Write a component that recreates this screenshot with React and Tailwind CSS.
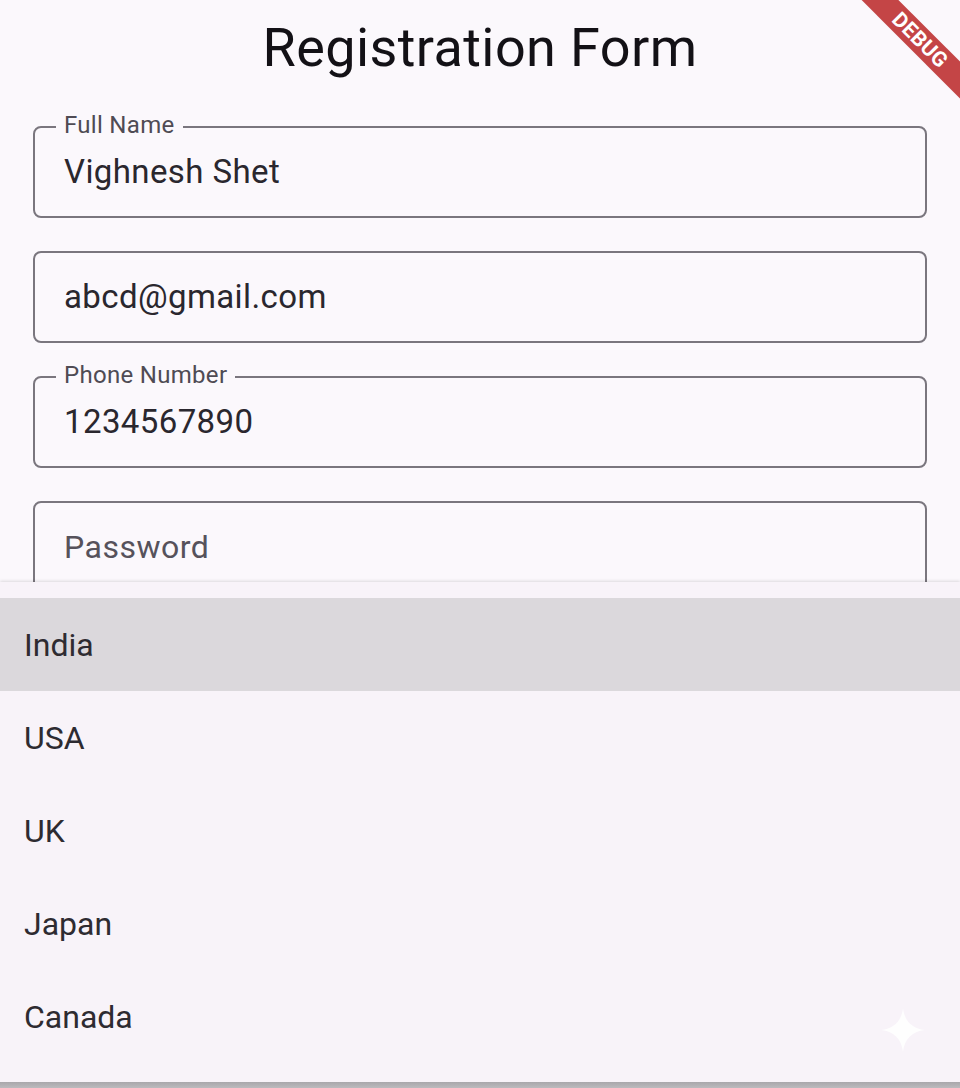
import React from "react";

const fields = [
  { label: "Full Name", value: "Vighnesh Shet", showLabel: true },
  { label: "Email", value: "abcd@gmail.com", showLabel: false },
  { label: "Phone Number", value: "1234567890", showLabel: true },
  { label: "Password", value: "", placeholder: "Password", showLabel: false },
];

const countries = ["India", "USA", "UK", "Japan", "Canada"];

function Field({ f }) {
  return (
    <div className="relative h-[92px] rounded-[8px] border-2 border-[#7a767e] flex items-center pl-[29px]">
      {f.showLabel && (
        <span className="absolute -top-[17px] left-[21px] px-[8px] bg-[#fbf8fc] text-[24px] leading-[28px] text-[#4f4b54] tracking-[0.3px]">
          {f.label}
        </span>
      )}
      {f.value ? (
        <span className="text-[33px] text-[#2a272e] tracking-[0.4px]">{f.value}</span>
      ) : (
        <span className="text-[32px] text-[#56525b] tracking-[0.5px]">{f.placeholder}</span>
      )}
    </div>
  );
}

export default function App() {
  return (
    <div
      className="relative w-[960px] h-[1088px] overflow-hidden bg-[#fbf8fc]"
      style={{ fontFamily: "Roboto, 'Noto Sans', sans-serif" }}
    >
      <div className="px-[33px] pt-[16px]">
        <h1 className="text-center text-[54px] leading-[64px] text-[#131116] tracking-[0.4px]">
          Registration Form
        </h1>
        <div className="mt-[46px] flex flex-col gap-[33px]">
          {fields.map((f) => (
            <Field key={f.label} f={f} />
          ))}
        </div>
      </div>

      {/* Dropdown menu overlay */}
      <div className="absolute left-0 right-0 top-[582px] h-[500px] bg-[#f8f3f9] pt-[16px] shadow-[0_-1px_3px_rgba(0,0,0,0.12),0_8px_8px_rgba(0,0,0,0.3)]">
        {countries.map((c, i) => (
          <div
            key={c}
            className={`h-[93px] flex items-center px-[24px] text-[32px] text-[#2e2b31] ${
              i === 0 ? "bg-[#dbd8dc]" : ""
            }`}
          >
            {c}
          </div>
        ))}
      </div>
      <div className="absolute left-0 right-0 top-[1082px] h-[6px] bg-gradient-to-b from-[#a9a7ab] to-[#bcbabe]" />

      {/* Sparkle watermark */}
      <svg
        className="absolute left-[879px] top-[1006px]"
        width="48"
        height="48"
        viewBox="0 0 48 48"
      >
        <path
          d="M24 2 C25.5 15 33 22.5 46 24 C33 25.5 25.5 33 24 46 C22.5 33 15 25.5 2 24 C15 22.5 22.5 15 24 2 Z"
          fill="#ffffff"
          fillOpacity="0.85"
        />
      </svg>

      {/* Debug banner */}
      <div className="absolute left-[820px] top-[27px] w-[200px] h-[26px] rotate-45 bg-[#b71c1cd0] flex items-center justify-center">
        <span className="text-white font-bold text-[21px] leading-none tracking-[0.3px]">DEBUG</span>
      </div>
    </div>
  );
}
